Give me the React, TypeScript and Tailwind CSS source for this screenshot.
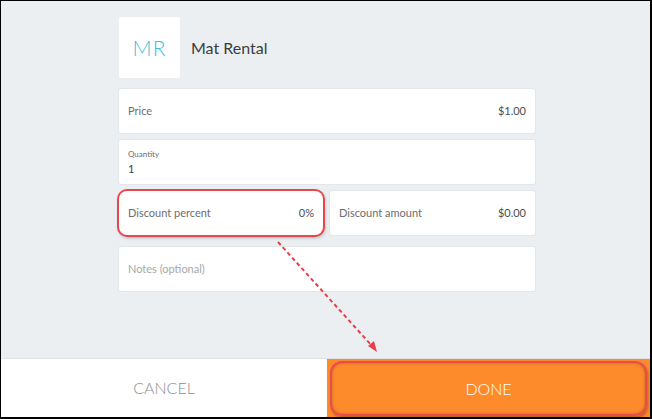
import React from 'react';

const Field: React.FC<{ label: string; value?: string; className?: string; muted?: boolean }> = ({
  label,
  value,
  className = '',
  muted,
}) => (
  <div
    className={`flex h-[44px] items-center justify-between rounded-[2px] bg-white px-[9px] shadow-[0_0_0_1px_#e3e6ea] ${className}`}
  >
    <span className={`text-[11px] ${muted ? 'text-[#a5a8ab]' : 'text-[#6b6e72]'}`}>{label}</span>
    {value && <span className="text-[11px] text-[#4a4d50]">{value}</span>}
  </div>
);

export default function App() {
  return (
    <div
      className="relative flex h-[419px] w-[652px] flex-col border-t border-l border-r-2 border-b-2 border-black bg-[#eceff2]"
      style={{ fontFamily: 'Lato, "Open Sans", sans-serif' }}
    >
      <div className="flex flex-1 flex-col">
        <div className="ml-[118px] flex w-[416px] flex-col pt-[16px]">
          <div className="flex items-center">
            <div className="flex h-[61px] w-[61px] items-center justify-center rounded-[2px] bg-white text-[21px] font-light tracking-[1px] text-[#3dbfd9]">
              MR
            </div>
            <span className="ml-[11px] text-[16px] text-[#3a3d40]">Mat Rental</span>
          </div>

          <div className="mt-[11px] flex flex-col gap-[7px]">
            <Field label="Price" value="$1.00" />
            <div className="flex h-[44px] flex-col justify-center rounded-[2px] bg-white px-[9px] shadow-[0_0_0_1px_#e3e6ea]">
              <span className="text-[8px] leading-[10px] text-[#6b6e72]">Quantity</span>
              <span className="mt-[3px] text-[11px] leading-[13px] text-[#3a3d40]">1</span>
            </div>
            <div className="flex gap-[7px]">
              <Field
                label="Discount percent"
                value="0%"
                className="w-[204px] rounded-[8px] shadow-[0_0_0_2px_#e8454c,1px_2px_4px_rgba(0,0,0,0.35)]"
              />
              <Field label="Discount amount" value="$0.00" className="flex-1" />
            </div>
            <Field label="Notes (optional)" muted className="mt-[5px]" />
          </div>
        </div>
      </div>

      <div className="flex h-[59px] border-t border-[#e0e3e6]">
        <div className="flex w-[326px] items-center justify-center bg-white text-[16px] font-light text-[#8c8f92]">
          CANCEL
        </div>
        <div className="flex flex-1 bg-[#fd8b2b] px-[3px] pt-[2px] pb-[1px]">
          <div className="flex flex-1 items-center justify-center rounded-[12px] border-2 border-[#ec4a4c] text-[16px] font-light text-white shadow-[inset_0_0_3px_rgba(120,60,20,0.5),1px_2px_3px_rgba(0,0,0,0.3)]">
            DONE
          </div>
        </div>
      </div>

      <svg className="pointer-events-none absolute left-0 top-0" width="652" height="419">
        <line
          x1="277"
          y1="241"
          x2="372"
          y2="346"
          stroke="#e8404a"
          strokeWidth="2"
          strokeDasharray="4 3"
        />
        <polygon points="376,351 367,345 373,340" fill="#e8404a" />
      </svg>
    </div>
  );
}
